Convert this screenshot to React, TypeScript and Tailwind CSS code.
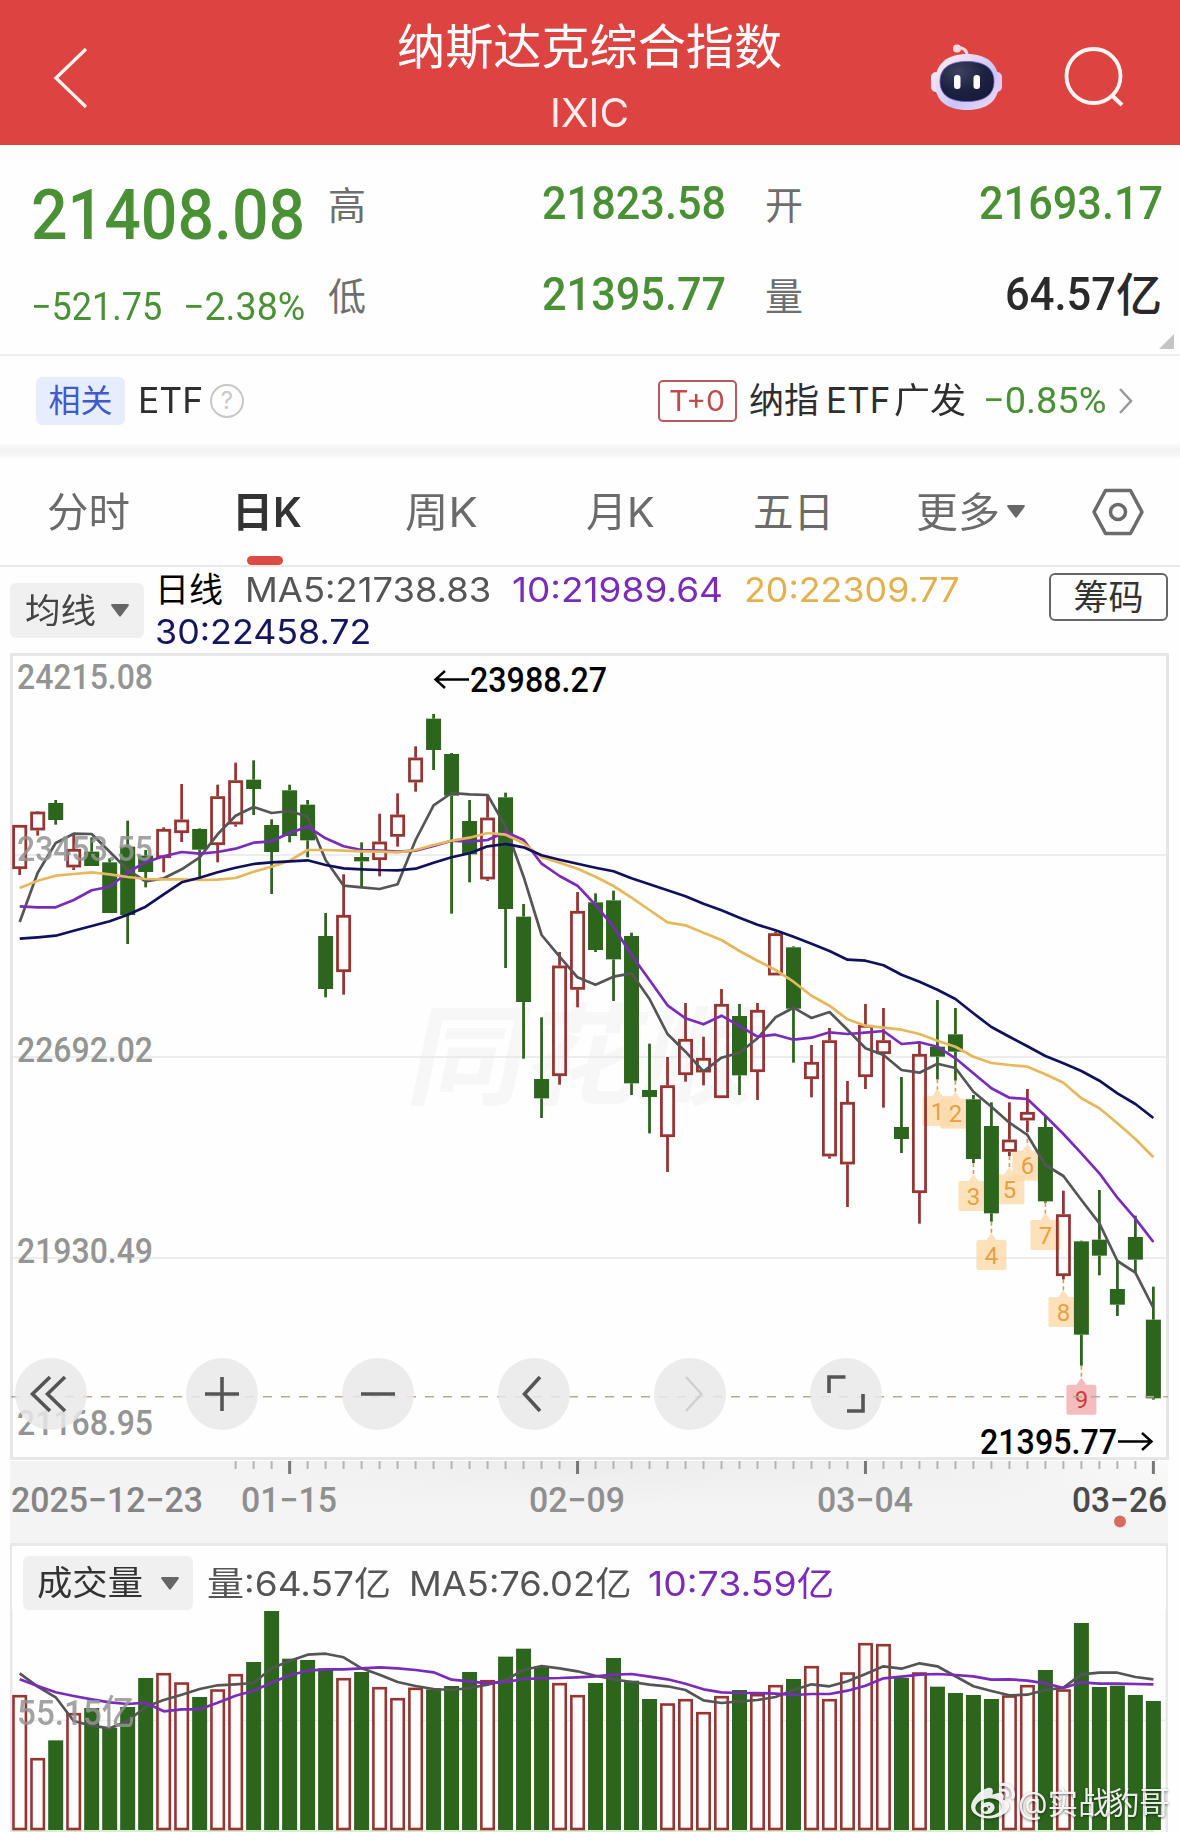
import { useLayoutEffect, useRef, useState } from "react";
import type { ReactNode } from "react";
import { FaWeibo } from "react-icons/fa";

const UI = "font-['Inter','Noto_Sans_CJK_SC',sans-serif]";
const NUM = "font-['Roboto','Noto_Sans_CJK_SC',sans-serif]";

const GREEN = "#2c661c";
const RED = "#963632";
const GREY = "#555555";
const PURPLE = "#7a2cb8";
const GOLD = "#e6b85c";
const NAVY = "#10105c";

/* Text condensed or widened to an exact width. */
function Fit({ w, className = "", children }: { w: number; className?: string; children: ReactNode }) {
  const ref = useRef<HTMLSpanElement>(null);
  const [scale, setScale] = useState(1);
  useLayoutEffect(() => {
    const el = ref.current;
    if (el && el.offsetWidth) setScale((w + 3) / el.offsetWidth);
  }, [w]);
  return (
    <span className="block shrink-0" style={{ width: w }}>
      <span
        ref={ref}
        className={`-ml-[2px] inline-block origin-left whitespace-nowrap ${className}`}
        style={{ transform: `scaleX(${scale})` }}
      >
        {children}
      </span>
    </span>
  );
}

type Candle = [up: 0 | 1, high: number, top: number, bottom: number, low: number];

/* Heights are in thirds of a pixel below the chart origin (650). */
const candles: Candle[] = [
  [1, 525, 525, 657, 675], [1, 483, 485, 541, 557], [0, 450, 459, 510, 524], [1, 555, 597, 652, 660],
  [0, 562, 605, 648, 648], [0, 625, 637, 789, 789], [0, 512, 590, 795, 882], [0, 600, 617, 666, 712],
  [1, 532, 537, 624, 667], [1, 402, 509, 549, 576], [0, 535, 537, 599, 685], [1, 404, 439, 585, 637],
  [1, 338, 391, 523, 530], [0, 331, 389, 417, 495], [0, 508, 525, 606, 732], [0, 404, 421, 558, 577],
  [0, 450, 464, 571, 622], [0, 789, 858, 1017, 1042], [1, 673, 795, 966, 1034], [0, 577, 621, 634, 712],
  [1, 491, 575, 630, 679], [1, 430, 494, 560, 590], [1, 289, 323, 397, 425], [0, 192, 206, 300, 360],
  [0, 309, 312, 437, 791], [0, 450, 513, 613, 697], [1, 437, 503, 688, 693], [0, 428, 442, 777, 954],
  [0, 762, 800, 1056, 1226], [0, 1102, 1287, 1345, 1404], [1, 906, 947, 1278, 1304], [1, 726, 783, 1019, 1072],
  [0, 730, 757, 900, 906], [0, 722, 751, 928, 1053], [0, 848, 858, 1300, 1335], [0, 1181, 1320, 1341, 1450],
  [1, 1221, 1306, 1461, 1566], [1, 1059, 1167, 1275, 1295], [1, 1160, 1224, 1267, 1306], [1, 1017, 1062, 1344, 1344],
  [0, 1062, 1098, 1276, 1335], [1, 1059, 1080, 1266, 1350], [1, 845, 850, 976, 976], [0, 889, 892, 1076, 1238],
  [1, 1185, 1236, 1287, 1342], [1, 1134, 1171, 1519, 1526], [1, 1293, 1356, 1543, 1671], [1, 1062, 1125, 1281, 1317],
  [1, 1074, 1171, 1212, 1373], [0, 1281, 1431, 1467, 1509], [1, 1180, 1212, 1629, 1721], [0, 1050, 1190, 1220, 1288],
  [0, 1074, 1153, 1205, 1292], [0, 1335, 1348, 1527, 1539], [0, 1357, 1428, 1690, 1715], [1, 1357, 1469, 1505, 1518],
  [1, 1317, 1386, 1411, 1446], [0, 1400, 1431, 1654, 1658], [1, 1622, 1693, 1878, 1888], [0, 1772, 1774, 2054, 2147],
  [0, 1620, 1769, 1817, 1876], [0, 1830, 1917, 1964, 1998], [0, 1697, 1761, 1829, 1868], [0, 1910, 2009, 2245, 2249],
];

const ma5 = [816, 668, 579, 551, 552, 605, 660, 694, 685, 658, 622, 553, 497, 471, 489, 483, 500, 630, 707, 712, 717, 703, 570, 466, 429, 433, 435, 530, 680, 855, 920, 982, 1004, 980, 970, 1047, 1152, 1205, 1264, 1223, 1208, 1165, 1102, 1073, 1104, 1086, 1139, 1195, 1215, 1260, 1268, 1241, 1254, 1325, 1370, 1418, 1455, 1545, 1578, 1650, 1720, 1833, 1868, 1974];
const ma10 = [769, 772, 772, 750, 721, 710, 667, 637, 619, 606, 611, 606, 596, 578, 574, 549, 530, 565, 589, 600, 602, 605, 602, 588, 572, 575, 570, 546, 570, 641, 678, 707, 765, 830, 915, 990, 1066, 1105, 1123, 1097, 1128, 1160, 1154, 1169, 1163, 1147, 1152, 1148, 1143, 1182, 1177, 1190, 1225, 1270, 1315, 1343, 1347, 1398, 1452, 1510, 1570, 1643, 1706, 1776];
const ma20 = [714, 692, 677, 672, 667, 673, 681, 687, 688, 688, 690, 689, 684, 665, 650, 632, 600, 600, 602, 604, 605, 607, 600, 585, 572, 563, 549, 554, 580, 622, 638, 656, 680, 708, 743, 780, 817, 826, 848, 870, 903, 932, 960, 995, 1037, 1067, 1108, 1127, 1133, 1139, 1152, 1172, 1190, 1220, 1239, 1245, 1250, 1273, 1298, 1345, 1375, 1420, 1467, 1522];
const ma30 = [866, 862, 857, 842, 828, 814, 794, 770, 733, 697, 683, 667, 653, 642, 637, 634, 631, 645, 655, 658, 660, 661, 656, 638, 622, 610, 589, 582, 592, 616, 629, 641, 653, 664, 685, 703, 721, 739, 761, 781, 803, 824, 841, 860, 881, 903, 929, 932, 946, 974, 995, 1019, 1047, 1090, 1131, 1160, 1189, 1218, 1240, 1263, 1292, 1330, 1362, 1404];

/* Bar tops and averages in thirds of a pixel below the volume origin (1560). */
const volumes = [405, 594, 541, 459, 444, 503, 441, 354, 339, 367, 411, 388, 342, 306, 153, 296, 300, 325, 354, 336, 381, 414, 383, 388, 378, 336, 360, 290, 266, 320, 369, 405, 369, 294, 362, 417, 430, 417, 456, 408, 390, 402, 375, 357, 318, 417, 337, 249, 252, 354, 337, 380, 399, 405, 417, 406, 375, 330, 388, 189, 381, 377, 405, 423];
const volumeUp = new Set([0, 1, 3, 8, 9, 11, 12, 18, 20, 21, 22, 26, 30, 31, 36, 37, 38, 39, 41, 42, 44, 45, 46, 47, 48, 50, 55, 56, 58]);
const vma5 = [340, 380, 412, 483, 497, 505, 483, 440, 420, 404, 387, 376, 373, 369, 325, 303, 284, 281, 292, 325, 344, 366, 378, 387, 390, 384, 374, 360, 330, 318, 325, 334, 347, 358, 366, 374, 379, 390, 421, 429, 424, 420, 411, 390, 373, 379, 364, 342, 319, 326, 310, 319, 349, 379, 393, 406, 404, 390, 383, 343, 338, 338, 351, 358];
const vma10 = [358, 378, 397, 408, 418, 427, 432, 428, 454, 448, 448, 428, 407, 392, 368, 346, 332, 328, 328, 325, 322, 325, 330, 337, 359, 364, 370, 366, 357, 355, 354, 352, 349, 344, 342, 350, 358, 371, 388, 397, 399, 399, 401, 405, 402, 402, 392, 377, 355, 350, 344, 342, 345, 349, 359, 358, 362, 370, 384, 367, 371, 371, 372, 373];

const signals = [
  { n: 1, i: 51, y: 1338 }, { n: 2, i: 52, y: 1346 }, { n: 3, i: 53, y: 1593 }, { n: 4, i: 54, y: 1770 },
  { n: 5, i: 55, y: 1573 }, { n: 6, i: 56, y: 1502 }, { n: 7, i: 57, y: 1710 }, { n: 8, i: 58, y: 1941 },
  { n: 9, i: 59, y: 2204 },
];

const cx = (i: number) => 19.7 + 17.995 * i;
const price = (v: number) => 650 + v / 3;
const vol = (v: number) => 1560 + v / 3;
const line = (data: number[], y: (v: number) => number) =>
  data.map((v, i) => `${cx(i).toFixed(1)},${y(v).toFixed(1)}`).join(" ");

function Label({ x, y, w, size = 35, fill = "#949494", children }: { x: number; y: number; w: number; size?: number; fill?: string; children: string }) {
  return (
    <text x={x - 1} y={y} textLength={w + 2} lengthAdjust="spacingAndGlyphs" fontSize={size} fill={fill} className={`font-medium ${NUM}`}>
      {children}
    </text>
  );
}

function PriceChart() {
  return (
    <svg className="block h-[808px] w-[1180px] overflow-visible" viewBox="0 653 1180 808">
      <rect x="11.5" y="654.5" width="1156" height="804" fill="#fefefe" stroke="#e6e6e6" strokeWidth="3" />
      <text transform="translate(404 1096) skewX(-12)" textLength="350" lengthAdjust="spacingAndGlyphs" fontSize="110" fill="#f7f7f7" className={`font-bold ${UI}`}>
        同花顺
      </text>
      {[855, 1057, 1258].map((y) => (
        <line key={y} x1="13" x2="1166" y1={y} y2={y} stroke="#e6e7e8" strokeWidth="1.6" />
      ))}
      {signals.map(({ n, i, y }) => {
        const x = cx(i);
        const t = price(y);
        return (
          <g key={n}>
            <line x1={x} x2={x} y1={price(candles[i][4])} y2={t - 6} stroke="#c9a063" strokeWidth="1.6" strokeDasharray="4 3" />
            <path
              d={`M${x - 13} ${t}H${x - 5}L${x} ${t - 7}L${x + 5} ${t}H${x + 13}Q${x + 15} ${t} ${x + 15} ${t + 2}V${t + 28}Q${x + 15} ${t + 30} ${x + 13} ${t + 30}H${x - 13}Q${x - 15} ${t + 30} ${x - 15} ${t + 28}V${t + 2}Q${x - 15} ${t} ${x - 13} ${t}Z`}
              fill={n === 9 ? "#f2b9b9" : "#fbd9a8"}
              fillOpacity={n === 9 ? 0.95 : 0.78}
            />
            <text x={x} y={t + 23.5} textAnchor="middle" fontSize="24" fill={n === 9 ? "#cf3a3a" : "#e8a040"} className={NUM}>
              {n}
            </text>
          </g>
        );
      })}
      {candles.map(([up, h, t, b, l], i) => {
        const x = cx(i);
        const color = up ? RED : GREEN;
        return (
          <g key={i} stroke={color} strokeWidth="2.8">
            <line x1={x} x2={x} y1={price(h)} y2={price(t)} />
            <line x1={x} x2={x} y1={price(b)} y2={price(l)} />
            {up ? (
              <rect x={x - 6.1} y={price(t) + 1.3} width="12.2" height={(b - t) / 3 - 2.6} fill="none" />
            ) : (
              <rect x={x - 7.5} y={price(t)} width="15" height={(b - t) / 3} fill={color} stroke="none" />
            )}
          </g>
        );
      })}
      <g fill="none" strokeWidth="2.7" strokeLinejoin="round">
        <polyline points={line(ma5, price)} stroke={GREY} />
        <polyline points={line(ma10, price)} stroke={PURPLE} />
        <polyline points={line(ma20, price)} stroke={GOLD} />
        <polyline points={line(ma30, price)} stroke={NAVY} />
      </g>
      <line x1="11" x2="1168" y1="1396.7" y2="1396.7" stroke="#b5aa98" strokeWidth="1.4" strokeDasharray="9 9" />
      <Label x={18} y={689} w={134}>24215.08</Label>
      <g opacity="0.85"><Label x={18} y={861} w={134}>23453.55</Label></g>
      <Label x={18} y={1062} w={134}>22692.02</Label>
      <Label x={18} y={1263} w={134}>21930.49</Label>
      <Label x={18} y={1435} w={134}>21168.95</Label>
      <Label x={471} y={692} w={135} fill="#000">23988.27</Label>
      <Label x={981} y={1454} w={135} fill="#000">21395.77</Label>
      <g fill="none" stroke="#000" strokeWidth="2.4">
        <path d="M469 679.500H436M445 671L435.500 679.500L445 688" />
        <path d="M1118 1441.500H1151M1142 1433L1151.500 1441.500L1142 1450" />
      </g>
    </svg>
  );
}

function TimeAxis() {
  const ticks = Array.from({ length: 52 }, (_, k) => k + 12);
  return (
    <div className="mx-[10px] h-[82px] w-[1158px] bg-[linear-gradient(90deg,#f3f3f3_20%,#ececec_50%,#f1f1f1_85%,#fafafa)]">
      <svg className="block h-[82px] w-[1158px] overflow-visible" viewBox="10 1461 1158 82">
        <defs>
          <linearGradient id="axisFade" x1="0" x2="0" y1="0" y2="1">
            <stop offset="0" stopColor="#f4f4f4" stopOpacity="0" />
            <stop offset="0.6" stopColor="#f4f4f4" />
          </linearGradient>
        </defs>
        <rect x="10" y="1461" width="1158" height="82" fill="url(#axisFade)" />
        {ticks.map((i) => {
          const major = (i - 15) % 16 === 0;
          return (
            <line key={i} x1={cx(i)} x2={cx(i)} y1="1461" y2={major ? 1474 : 1469} stroke={major ? "#777" : "#b4b4b4"} strokeWidth={major ? 3 : 2} />
          );
        })}
        <Label x={12} y={1512} w={190} fill="#858585">2025−12−23</Label>
        <Label x={242} y={1512} w={94} fill="#8f8f8f">01−15</Label>
        <Label x={530} y={1512} w={94} fill="#8f8f8f">02−09</Label>
        <Label x={818} y={1512} w={94} fill="#8f8f8f">03−04</Label>
        <Label x={1073} y={1512} w={93} fill="#4a4a4a">03−26</Label>
        <circle cx="1120" cy="1521.500" r="6" fill="#d96b66" />
      </svg>
    </div>
  );
}

function VolumeChart() {
  return (
    <svg className="block h-[222px] w-[1180px]" viewBox="0 1610 1180 222">
      <path d="M11.250 1610V1832M1166.750 1610V1832" stroke="#e8e8e8" strokeWidth="2.500" />
      <line x1="13" x2="1166" y1="1720.500" y2="1720.500" stroke="#ececec" strokeWidth="1.5" />
      <rect x="12" y="1830" width="1142" height="2" fill="#d8efd0" />
      {volumes.map((v, i) => {
        const x = cx(i);
        const y = vol(v);
        return volumeUp.has(i) ? (
          <rect key={i} x={x - 6.2} y={y + 1.2} width="12.4" height={1829 - y - 1.2} fill="#fffdfc" stroke={RED} strokeWidth="2.600" />
        ) : (
          <rect key={i} x={x - 7.5} y={y} width="15" height={1830 - y} fill={GREEN} />
        );
      })}
      <g fill="none" strokeWidth="2.700" strokeLinejoin="round">
        <polyline points={line(vma5, vol)} stroke={GREY} />
        <polyline points={line(vma10, vol)} stroke={PURPLE} />
      </g>
      <g opacity="0.85"><Label x={18} y={1725} w={116}>55.15亿</Label></g>
    </svg>
  );
}

function Triangle() {
  return (
    <svg className="block h-[13px] w-[18px]" viewBox="0 0 18 13"><path d="M1 0H17Q18.500 .5 17.500 2L10 12Q9 13.500 8 12L.5 2Q-.5 .5 1 0Z" fill="#666" /></svg>
  );
}

function Robot() {
  return (
    <svg className="block h-[68px] w-[74px]" viewBox="0 0 74 68">
      <defs>
        <linearGradient id="shell" x1="0" x2="1" y1="0" y2="1">
          <stop offset="0.1" stopColor="#fbe9ef" />
          <stop offset="0.6" stopColor="#c9c4f6" />
          <stop offset="1" stopColor="#f2dcf0" />
        </linearGradient>
        <radialGradient id="visor" cx="0.35" cy="0.25" r="0.8">
          <stop offset="0" stopColor="#3d4261" />
          <stop offset="0.6" stopColor="#1c2140" />
          <stop offset="1" stopColor="#171b38" />
        </radialGradient>
      </defs>
      <path d="M27 5Q36 3.500 37.500 13" fill="none" stroke="#f9d9df" strokeWidth="3" />
      <circle cx="27" cy="5.500" r="4" fill="#fbdde1" />
      <rect x="1" y="29" width="10" height="20" rx="5" fill="#f5e3f3" />
      <rect x="62" y="29" width="10" height="20" rx="5" fill="#d9cdf5" />
      <path d="M37 11C56 11 69 20 69 40C69 58 57 67 37 67C17 67 5 58 5 40C5 20 18 11 37 11Z" fill="url(#shell)" />
      <path d="M37 18.500C54 18.500 64 25 64 38.500C64 52 54 58.500 37 58.500C20 58.500 10 52 10 38.500C10 25 20 18.500 37 18.500Z" fill="url(#visor)" stroke="#6659c9" strokeWidth="0.8" />
      <rect x="24" y="32" width="6.500" height="14" rx="3" fill="#fff" />
      <rect x="43.500" y="32" width="6.500" height="14" rx="3" fill="#fff" />
    </svg>
  );
}

const toolPaths = [
  "M35 19L17.500 36L35 53M50 19L32.500 36L50 53",
  "M19 36H53M36 19V53",
  "M19 36H53",
  "M42 19L26.500 36L42 53",
  "M32 19L47.500 36L32 53",
  "M19 35V19H35.500M53 36V53H37",
];

function ChartTools() {
  const margins = ["ml-[15px]", "ml-[99px]", "ml-[84px]", "ml-[84px]", "ml-[84px]", "ml-[84px]"];
  return (
    <div className="absolute left-0 top-[705px] flex">
      {toolPaths.map((d, i) => (
        <button key={d} className={`size-[72px] shrink-0 rounded-full bg-[#e9e9e9]/85 ${margins[i]}`}>
          <svg className="block size-[72px]" viewBox="0 0 72 72">
            <path d={d} fill="none" stroke={i === 4 ? "#cfcfcf" : "#555"} strokeWidth={i === 4 ? 2.500 : 3.600} />
          </svg>
        </button>
      ))}
    </div>
  );
}

export default function App() {
  return (
    <div className={`flex h-[1832px] w-[1180px] flex-col overflow-hidden bg-[#fefefe] leading-none ${UI}`}>
      <header className="relative flex h-[145px] shrink-0 items-center bg-[#dd4341] text-white">
        <svg className="ml-[52px] mt-[11px] h-[62px] w-[38px]" viewBox="0 0 38 62"><path d="M34 2L4 31L34 60" fill="none" stroke="#fff6f4" strokeWidth="3.200" /></svg>
        <div className="ml-[308px] flex h-[145px] w-[384px] flex-col items-center">
          <div className="mt-[20px] h-[54px] text-[48px] font-normal leading-[54px]"><Fit w={382}>纳斯达克综合指数</Fit></div>
          <div className="mt-[11px] text-[40px] font-normal leading-[56px] text-[#ffeeec]">
            <Fit w={76}>IXIC</Fit>
          </div>
        </div>
        <div className="ml-[148px] mt-[8px]"><Robot /></div>
        <svg className="ml-[59px] mt-[7px] h-[62px] w-[62px]" viewBox="0 0 62 62">
          <circle cx="30.500" cy="31" r="27" fill="none" stroke="#fff6f4" strokeWidth="3.800" />
          <path d="M48.500 50L59 60" stroke="#fff6f4" strokeWidth="4" />
        </svg>
      </header>

      <section className={`relative flex h-[211px] shrink-0 border-b-2 border-[#eeeeee] text-[#4a9136] ${NUM}`}>
        <div className="ml-[33px] w-[271px]">
          <div className="mt-[32px] h-[76px] text-[71px] font-medium leading-[76px]"><Fit w={271}>21408.08</Fit></div>
          <div className="mt-[34px] flex h-[40px] justify-between text-[38.500px] leading-[40px]">
            <Fit w={128}>−521.75</Fit>
            <Fit w={119}>−2.38%</Fit>
          </div>
        </div>
        <div className="ml-[24px] flex flex-col text-[38px] text-[#6e6e6e]">
          <span className="mt-[39px] h-[44px] leading-[44px]">高</span>
          <span className="mt-[47px] h-[44px] leading-[44px]">低</span>
        </div>
        <div className="ml-[178px] flex flex-col text-[47px] font-medium">
          <div className="mt-[33px] h-[50px] leading-[50px]"><Fit w={181}>21823.58</Fit></div>
          <div className="mt-[41px] h-[50px] leading-[50px]"><Fit w={181}>21395.77</Fit></div>
        </div>
        <div className="ml-[40px] flex flex-col text-[38px] text-[#6e6e6e]">
          <span className="mt-[39px] h-[44px] leading-[44px]">开</span>
          <span className="mt-[47px] h-[44px] leading-[44px]">量</span>
        </div>
        <div className="ml-auto mr-[18px] flex flex-col items-end text-[47px] font-medium">
          <div className="mt-[33px] h-[50px] leading-[50px]"><Fit w={181}>21693.17</Fit></div>
          <div className="mt-[41px] flex h-[50px] leading-[50px] text-[#2a2a2a]">
            <Fit w={108}>64.57</Fit>
            <span className="ml-px mt-px text-[46px] font-medium">亿</span>
          </div>
        </div>
        <svg className="absolute bottom-[5px] right-[6px] h-[15px] w-[15px]" viewBox="0 0 15 15"><path d="M15 0V15H0Z" fill="#c4c4c4" /></svg>
      </section>

      <section className="flex h-[88px] shrink-0 items-center pt-px text-[35px] text-[#2e2e2e]">
        <span className="ml-[36px] flex h-[48px] w-[89px] items-center justify-center rounded-md bg-[#e6edfc] text-[32px] text-[#4159cc]">相关</span>
        <span className="ml-[15px]"><Fit w={62}>ETF</Fit></span>
        <span className="ml-[8px] flex size-[34px] items-center justify-center rounded-full border-[2.5px] border-[#c8c8c8] text-[24px] text-[#c8c8c8]">?</span>
        <span className="ml-[414px] flex h-[42px] w-[79px] items-center justify-center rounded-[5px] border-2 border-[#b85a5a] text-[29px] text-[#c24a48]"><Fit w={53}>T+0</Fit></span>
        <span className="ml-[14px]"><Fit w={67}>纳指</Fit></span>
        <span className="ml-[10px]"><Fit w={61}>ETF</Fit></span>
        <span className="ml-[7px]"><Fit w={69}>广发</Fit></span>
        <span className={`ml-[20px] text-[37px] text-[#4a9136] ${NUM}`}><Fit w={120}>−0.85%</Fit></span>
        <svg className="ml-[13px] h-[28px] w-[16px]" viewBox="0 0 16 28"><path d="M2 2L13 14L2 26" fill="none" stroke="#999" strokeWidth="2.500" /></svg>
      </section>
      <div className="h-[14px] shrink-0 bg-[linear-gradient(#fafafa,#f3f3f3_40%,#f3f3f3_60%,#fafafa)]" />

      <nav className="relative flex h-[109px] shrink-0 items-center border-b-2 border-[#e9e9e9] pt-[3px] text-[40.500px] text-[#6b6b6b]">
        <span className="ml-[49px]"><Fit w={80}>分时</Fit></span>
        <span className="ml-[105px] font-semibold text-[#333]"><Fit w={67}>日K</Fit></span>
        <span className="ml-[106px]"><Fit w={70}>周K</Fit></span>
        <span className="ml-[111px]"><Fit w={66}>月K</Fit></span>
        <span className="ml-[101px]"><Fit w={78}>五日</Fit></span>
        <span className="ml-[85px]"><Fit w={81}>更多</Fit></span>
        <span className="-mt-[3px] ml-[8px]"><Triangle /></span>
        <svg className="-mt-[3px] ml-[66px] h-[48px] w-[54px]" viewBox="0 0 54 48">
          <path d="M14.500 2.500H39.500L51 24L39.500 45.500H14.500L3 24Z" fill="none" stroke="#6b6b6b" strokeWidth="3.500" strokeLinejoin="round" />
          <circle cx="27" cy="24" r="7.500" fill="none" stroke="#6b6b6b" strokeWidth="3.500" />
        </svg>
        <span className="absolute bottom-0 left-[247px] h-[9px] w-[36px] rounded-full bg-[#dc4a44]" />
      </nav>

      <section className="flex h-[86px] shrink-0 text-[34px] text-[#444]">
        <div className="ml-[10px] mt-[16px] flex h-[55px] w-[134px] items-center rounded-md bg-[#f0f0f0]">
          <span className="ml-[17px]"><Fit w={68}>均线</Fit></span>
          <span className="ml-[16px]"><Triangle /></span>
        </div>
        <div className="ml-[13px] mt-px w-[805px]">
          <div className="flex h-[43px] items-center">
            <span className="text-black"><Fit w={65}>日线</Fit></span>
            <span className="ml-[25px] text-[#555]"><Fit w={243}>MA5:21738.83</Fit></span>
            <span className="ml-[24px] text-[#7a2cb8]"><Fit w={208}>10:21989.64</Fit></span>
            <span className="ml-[24px] text-[#e3b04e]"><Fit w={213}>20:22309.77</Fit></span>
          </div>
          <div className="flex h-[42px] items-center text-[#15155f]"><Fit w={213}>30:22458.72</Fit></div>
        </div>
        <div className="ml-[87px] mt-[6px] flex h-[48px] w-[119px] items-center justify-center rounded-md border-2 border-[#666] text-[35px] text-[#333]">筹码</div>
      </section>

      <section className="relative shrink-0">
        <PriceChart />
        <ChartTools />
      </section>
      <div className="shrink-0"><TimeAxis /></div>

      <section className="relative shrink-0">
        <div className="ml-[10px] flex h-[67px] w-[1158px] items-center border-x-[2.5px] border-t-[3px] border-[#e8e8e8] pt-[9px] text-[34px] text-[#555]">
          <div className="ml-[11px] flex h-[54px] w-[170px] items-center rounded-md bg-[#f0f0f0] pt-px text-[#333]">
            <span className="ml-[16px]"><Fit w={103}>成交量</Fit></span>
            <span className="ml-[19px]"><Triangle /></span>
          </div>
          <div className="ml-[16px] flex pt-[3px]">
            <Fit w={181}>量:64.57亿</Fit>
            <span className="ml-[21px]"><Fit w={219}>MA5:76.02亿</Fit></span>
            <span className="ml-[20px] text-[#7a2cb8]"><Fit w={183}>10:73.59亿</Fit></span>
          </div>
        </div>
        <VolumeChart />
        <div className="absolute bottom-[8px] right-[11px] flex items-center text-[31px] text-white/90 [text-shadow:0_1px_3px_rgba(0,0,0,0.6)]">
          <FaWeibo className="size-[44px] drop-shadow-[0_1px_1.5px_rgba(0,0,0,0.5)]" />
          <span className="ml-[5px]"><Fit w={149}>@实战豹哥</Fit></span>
        </div>
      </section>
    </div>
  );
}
